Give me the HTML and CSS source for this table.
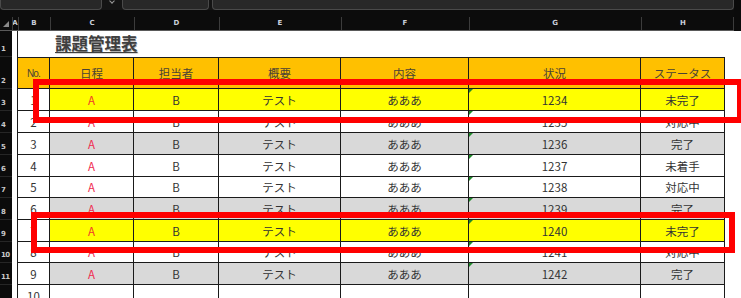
FILE: index.html
```html
<!DOCTYPE html>
<html lang="ja">
<head>
<meta charset="utf-8">
<title>課題管理表</title>
<link rel="stylesheet" href="styles.css">
</head>
<body>
<div class="app">
  <div class="topbar">
    <div class="box box-name"></div>
    <div class="dd"><span class="dd-mark"></span></div>
    <div class="box box-fn"></div>
    <div class="box box-formula"></div>
  </div>
  <div class="colheads">
    <div class="ch ch-corner"><span class="tri"></span></div>
    <div class="ch ch-a">A</div>
    <div class="ch ch-b">B</div>
    <div class="ch ch-c">C</div>
    <div class="ch ch-d">D</div>
    <div class="ch ch-e">E</div>
    <div class="ch ch-f">F</div>
    <div class="ch ch-g">G</div>
    <div class="ch ch-h">H</div>
  </div>
  <div class="sheet">
    <div class="row r-title">
      <div class="rh">1</div><div class="ca"></div><div class="cb plain"></div>
      <div class="title">課題管理表</div>
    </div>
    <div class="row r-head">
      <div class="rh">2</div><div class="ca"></div>
      <div class="cell cb hd no">No.</div>
      <div class="cell cc hd">日程</div>
      <div class="cell cd hd">担当者</div>
      <div class="cell ce hd">概要</div>
      <div class="cell cf hd">内容</div>
      <div class="cell cg hd">状況</div>
      <div class="cell chh hd">ステータス</div>
    </div>

    <div class="row r22 yellow">
      <div class="rh">3</div><div class="ca"></div>
      <div class="cell cb">1</div><div class="cell cc red">A</div><div class="cell cd">B</div><div class="cell ce">テスト</div><div class="cell cf">あああ</div><div class="cell cg txtnum">1234</div><div class="cell chh">未完了</div>
    </div>
    <div class="row r22">
      <div class="rh">4</div><div class="ca"></div>
      <div class="cell cb">2</div><div class="cell cc red">A</div><div class="cell cd">B</div><div class="cell ce">テスト</div><div class="cell cf">あああ</div><div class="cell cg txtnum">1235</div><div class="cell chh">対応中</div>
    </div>
    <div class="row r22 gray">
      <div class="rh">5</div><div class="ca"></div>
      <div class="cell cb">3</div><div class="cell cc red">A</div><div class="cell cd">B</div><div class="cell ce">テスト</div><div class="cell cf">あああ</div><div class="cell cg txtnum">1236</div><div class="cell chh">完了</div>
    </div>
    <div class="row r22">
      <div class="rh">6</div><div class="ca"></div>
      <div class="cell cb">4</div><div class="cell cc red">A</div><div class="cell cd">B</div><div class="cell ce">テスト</div><div class="cell cf">あああ</div><div class="cell cg txtnum">1237</div><div class="cell chh">未着手</div>
    </div>
    <div class="row r21">
      <div class="rh">7</div><div class="ca"></div>
      <div class="cell cb">5</div><div class="cell cc red">A</div><div class="cell cd">B</div><div class="cell ce">テスト</div><div class="cell cf">あああ</div><div class="cell cg txtnum">1238</div><div class="cell chh">対応中</div>
    </div>
    <div class="row r22 gray">
      <div class="rh">8</div><div class="ca"></div>
      <div class="cell cb">6</div><div class="cell cc red">A</div><div class="cell cd">B</div><div class="cell ce">テスト</div><div class="cell cf">あああ</div><div class="cell cg txtnum">1239</div><div class="cell chh">完了</div>
    </div>
    <div class="row r22 yellow">
      <div class="rh">9</div><div class="ca"></div>
      <div class="cell cb">7</div><div class="cell cc red">A</div><div class="cell cd">B</div><div class="cell ce">テスト</div><div class="cell cf">あああ</div><div class="cell cg txtnum">1240</div><div class="cell chh">未完了</div>
    </div>
    <div class="row r21">
      <div class="rh">10</div><div class="ca"></div>
      <div class="cell cb">8</div><div class="cell cc red">A</div><div class="cell cd">B</div><div class="cell ce">テスト</div><div class="cell cf">あああ</div><div class="cell cg txtnum">1241</div><div class="cell chh">対応中</div>
    </div>
    <div class="row r22 gray">
      <div class="rh">11</div><div class="ca"></div>
      <div class="cell cb">9</div><div class="cell cc red">A</div><div class="cell cd">B</div><div class="cell ce">テスト</div><div class="cell cf">あああ</div><div class="cell cg txtnum">1242</div><div class="cell chh">完了</div>
    </div>
    <div class="row r22">
      <div class="rh"></div><div class="ca"></div>
      <div class="cell cb">10</div><div class="cell cc"></div><div class="cell cd"></div><div class="cell ce"></div><div class="cell cf"></div><div class="cell cg"></div><div class="cell chh"></div>
    </div>
  </div>

  <div class="mark mark-1"></div>
  <div class="mark mark-2"></div>
</div>
</body>
</html>
```

FILE: styles.css
```css
* { box-sizing: border-box; }
html, body {
  margin: 0;
  padding: 0;
  background: #0b0b0b;
  overflow: hidden;
}
.app {
  position: relative;
  width: 741px;
  height: 298px;
  overflow: hidden;
  font-family: "Noto Sans CJK JP", "Noto Sans", sans-serif;
}

/* top formula bar */
.topbar {
  height: 10px;
  display: flex;
  align-items: flex-end;
  background: #141414;
  width: 734px;
}
.box {
  height: 10px;
  background: #282828;
  border: 1px solid #4a4a4a;
  border-top: none;
  border-radius: 0 0 4px 4px;
}
.box-name { width: 102px; }
.dd {
  width: 20px;
  height: 10px;
  display: flex;
  justify-content: center;
  align-items: flex-start;
}
.dd-mark {
  width: 4px;
  height: 4px;
  margin-top: -1px;
  border-right: 1px solid #9a9a9a;
  border-bottom: 1px solid #9a9a9a;
  transform: rotate(45deg);
}
.box-fn { width: 87px; }
.box-formula { width: 522px; margin-left: 3px; }

/* column headers */
.colheads {
  height: 21px;
  width: 734px;
  display: flex;
  background: #0c0c0c;
  border-bottom: 1px solid #5a5a5a;
  color: #c9cfdb;
  font-family: "DejaVu Sans", sans-serif;
  font-weight: bold;
  font-size: 7px;
}
.ch {
  height: 100%;
  display: flex;
  align-items: flex-end;
  justify-content: center;
  padding-bottom: 3px;
  position: relative;
}
.ch + .ch::before {
  content: "";
  position: absolute;
  left: 0;
  top: 7px;
  bottom: 0;
  width: 1px;
  background: #3c3c3c;
}
.ch-corner { width: 12px; justify-content: flex-start; padding-left: 3px; padding-bottom: 3px; }
.tri {
  width: 0; height: 0;
  border-left: 6px solid transparent;
  border-bottom: 6px solid #8a8a8a;
}
.ch-a { width: 6px; }
.ch-b { width: 32px; }
.ch-c { width: 84px; }
.ch-d { width: 85px; }
.ch-e { width: 122px; }
.ch-f { width: 128px; }
.ch-g { width: 172px; }
.ch-h { width: 84px; }
.ch-h::after {
  content: "";
  position: absolute;
  right: -9px;
  top: 7px;
  bottom: 0;
  width: 1px;
  background: #3c3c3c;
}

/* sheet */
.sheet {
  background: #ffffff;
  width: 741px;
  height: 267px;
}
.row {
  display: flex;
}
.r-title { height: 26px; }
.r-head { height: 32px; }
.r22 { height: 22px; }
.r21 { height: 21px; }

.rh {
  width: 12px;
  flex: none;
  background: #0b0b0b;
  color: #c8c8c8;
  font-family: "DejaVu Sans", sans-serif;
  font-weight: bold;
  font-size: 7px;
  display: flex;
  align-items: flex-end;
  padding-left: 1px;
  padding-bottom: 3px;
  border-bottom: 1px solid #262626;
  letter-spacing: -0.5px;
}
.ca {
  width: 5px;
  flex: none;
  background: #fff;
  position: relative;
}
.cb.plain { width: 33px; flex: none; }

.title {
  padding-left: 5px;
  padding-top: 1px;
  font-size: 16.5px;
  line-height: 22px;
  font-weight: bold;
  color: #3f3f3f;
  white-space: nowrap;
  text-decoration: underline;
  text-decoration-thickness: 1px;
  text-underline-offset: 2px;
  text-shadow: 0.5px 0.5px 0 #b0b0b0;
}

.cell {
  flex: none;
  height: 100%;
  border-right: 1px solid #1a1a1a;
  border-bottom: 1px solid #1a1a1a;
  display: flex;
  align-items: center;
  justify-content: center;
  font-size: 11.5px;
  color: #333333;
  white-space: nowrap;
  position: relative;
}
.cb { width: 33px; border-left: 1px solid #1a1a1a; background: #fff; }
.cc { width: 84px; }
.cd { width: 85px; }
.ce { width: 122px; }
.cf { width: 128px; }
.cg { width: 172px; }
.chh { width: 84px; }

.hd {
  background: #ffc000;
  border-top: 1px solid #1a1a1a;
  color: #4a4236;
  padding-bottom: 0;
}
.hd.no {
  font-size: 10px;
  letter-spacing: -0.8px;
  font-family: "Liberation Sans Narrow", "Liberation Sans", sans-serif;
}

.yellow .cell:not(.cb) { background: #ffff00; }
.gray .cell:not(.cb) { background: #d9d9d9; }

.red { color: #f02c50; }
.yellow .red { color: #f03a2a; }

.txtnum::before {
  content: "";
  position: absolute;
  left: 0;
  top: 0;
  width: 0;
  height: 0;
  border-top: 4px solid #1e8a2a;
  border-right: 4px solid transparent;
}

/* red annotation rectangles */
.mark {
  position: absolute;
  border: 6px solid #ff0000;
  pointer-events: none;
}
.mark-1 { left: 33px; top: 79px; width: 710px; height: 44px; }
.mark-2 { left: 31px; top: 212px; width: 704px; height: 41px; }
```
